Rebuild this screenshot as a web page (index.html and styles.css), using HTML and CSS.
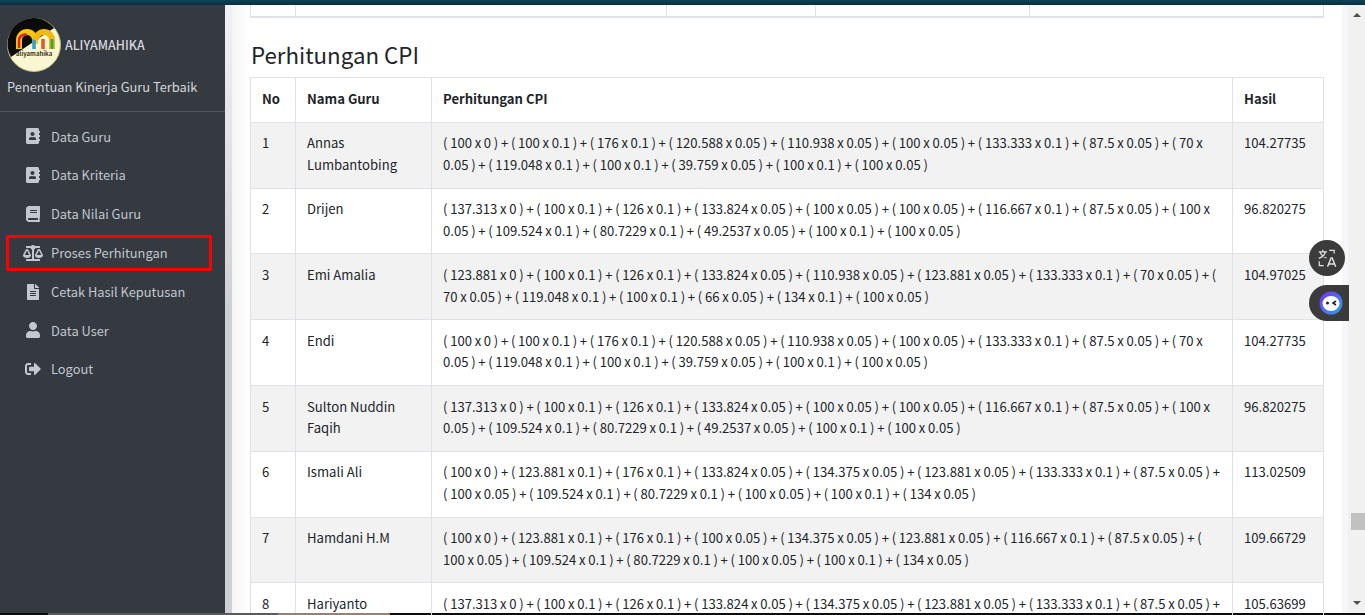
FILE: index.html
```html
<!DOCTYPE html>
<html lang="en">
<head>
    <meta charset="UTF-8">
    <meta name="viewport" content="width=device-width, initial-scale=1.0">
    <title>Perhitungan CPI</title>
    <link rel="stylesheet" href="styles.css">
</head>
<body>

    <div class="topbar"></div>

    <div class="layout">
        <aside class="sidebar">
            <div class="brand">
                <svg class="logo" viewBox="0 0 54 54">
                    <circle cx="27" cy="27" r="26.500" fill="#fbf6d2" stroke="#b9c07a" stroke-width="1"/>
                    <path d="M4 39 A26 26 0 0 1 47 10 Z" fill="#0b0b0b"/>
                    <path d="M12 31 V22 A8 8 0 0 1 28 22 V26" fill="none" stroke="#f6c712" stroke-width="6"/>
                    <path d="M12 30 V23 A6 6 0 0 1 20 17" fill="none" stroke="#e0202a" stroke-width="2.500"/>
                    <path d="M27 31 V21" fill="none" stroke="#2c9fd8" stroke-width="3.500"/>
                    <path d="M29 22 A8 8 0 0 1 45 22 V31" fill="none" stroke="#f2b90f" stroke-width="6"/>
                    <path d="M36 31 V21" fill="none" stroke="#e8541a" stroke-width="3.500"/>
                    <path d="M45 31 V21" fill="none" stroke="#3aa845" stroke-width="3"/>
                    <text class="logo-text" x="9" y="38">aliyamahika</text>
                </svg>
                <span class="brand-name">ALIYAMAHIKA</span>
            </div>
            <div class="brand-sub">Penentuan Kinerja Guru Terbaik</div>

            <nav class="nav">
                <a class="nav-link">
                    <svg class="nav-icon" viewBox="0 0 448 512"><path d="M436 160c6.600 0 12-5.400 12-12v-40c0-6.600-5.400-12-12-12h-20V48c0-26.500-21.500-48-48-48H48C21.500 0 0 21.500 0 48v416c0 26.500 21.500 48 48 48h320c26.500 0 48-21.500 48-48v-48h20c6.600 0 12-5.400 12-12v-40c0-6.600-5.400-12-12-12h-20v-64h20c6.600 0 12-5.400 12-12v-40c0-6.600-5.400-12-12-12h-20v-64h20zm-228-32c35.300 0 64 28.700 64 64s-28.700 64-64 64-64-28.700-64-64 28.700-64 64-64zm112 236.800c0 10.600-10 19.200-22.400 19.200H118.400C106 384 96 375.400 96 364.800v-19.200c0-31.800 30.100-57.600 67.200-57.600h5c12.300 5.100 25.700 8 39.800 8s27.600-2.900 39.800-8h5c37.100 0 67.200 25.800 67.200 57.600v19.200z"/></svg>
                    Data Guru
                </a>
                <a class="nav-link">
                    <svg class="nav-icon" viewBox="0 0 448 512"><path d="M436 160c6.600 0 12-5.400 12-12v-40c0-6.600-5.400-12-12-12h-20V48c0-26.500-21.500-48-48-48H48C21.500 0 0 21.500 0 48v416c0 26.500 21.500 48 48 48h320c26.500 0 48-21.500 48-48v-48h20c6.600 0 12-5.400 12-12v-40c0-6.600-5.400-12-12-12h-20v-64h20c6.600 0 12-5.400 12-12v-40c0-6.600-5.400-12-12-12h-20v-64h20zm-228-32c35.300 0 64 28.700 64 64s-28.700 64-64 64-64-28.700-64-64 28.700-64 64-64zm112 236.800c0 10.600-10 19.200-22.400 19.200H118.400C106 384 96 375.400 96 364.800v-19.200c0-31.800 30.100-57.600 67.200-57.600h5c12.300 5.100 25.700 8 39.800 8s27.600-2.900 39.800-8h5c37.100 0 67.200 25.800 67.200 57.600v19.200z"/></svg>
                    Data Kriteria
                </a>
                <a class="nav-link">
                    <svg class="nav-icon" viewBox="0 0 448 512"><path d="M448 360V24c0-13.300-10.700-24-24-24H96C43 0 0 43 0 96v320c0 53 43 96 96 96h328c13.300 0 24-10.700 24-24v-16c0-7.500-3.500-14.300-8.900-18.700-4.200-15.400-4.200-59.300 0-74.700 5.400-4.300 8.900-11.100 8.900-18.600zM128 134c0-3.300 2.700-6 6-6h212c3.300 0 6 2.700 6 6v20c0 3.300-2.700 6-6 6H134c-3.300 0-6-2.700-6-6v-20zm0 64c0-3.300 2.700-6 6-6h212c3.300 0 6 2.700 6 6v20c0 3.300-2.700 6-6 6H134c-3.300 0-6-2.700-6-6v-20zm253.400 250H96c-17.700 0-32-14.300-32-32 0-17.600 14.400-32 32-32h285.400c-1.900 17.100-1.900 46.900 0 64z"/></svg>
                    Data Nilai Guru
                </a>
                <a class="nav-link active">
                    <svg class="nav-icon" viewBox="0 0 640 512"><path d="M256 336h-.02c0-16.180 1.340-8.730-85.050-181.510-17.650-35.290-68.190-35.360-85.870 0C-2.060 328.750.02 320.330.02 336H0c0 44.180 57.310 80 128 80s128-35.820 128-80zM128 176l72 144H56l72-144zm511.980 160c0-16.180 1.340-8.730-85.050-181.510-17.650-35.290-68.190-35.360-85.870 0-87.120 174.260-85.040 165.840-85.040 181.510H384c0 44.180 57.310 80 128 80s128-35.820 128-80h-.02zM440 320l72-144 72 144H440zm88 128H352V153.250c23.510-10.290 41.160-31.480 46.390-57.250H528c8.840 0 16-7.160 16-16V48c0-8.840-7.160-16-16-16H383.640C369.040 12.680 346.090 0 320 0s-49.040 12.680-63.640 32H112c-8.840 0-16 7.160-16 16v32c0 8.840 7.160 16 16 16h129.610c5.230 25.760 22.870 46.960 46.390 57.250V448H112c-8.840 0-16 7.160-16 16v32c0 8.840 7.160 16 16 16h416c8.840 0 16-7.160 16-16v-32c0-8.840-7.160-16-16-16z"/></svg>
                    Proses Perhitungan
                </a>
                <a class="nav-link">
                    <svg class="nav-icon" viewBox="0 0 384 512"><path d="M224 136V0H24C10.700 0 0 10.700 0 24v464c0 13.300 10.700 24 24 24h336c13.300 0 24-10.700 24-24V160H248c-13.200 0-24-10.800-24-24zm64 236c0 6.600-5.400 12-12 12H108c-6.600 0-12-5.400-12-12v-8c0-6.600 5.400-12 12-12h168c6.600 0 12 5.400 12 12v8zm0-64c0 6.600-5.400 12-12 12H108c-6.600 0-12-5.400-12-12v-8c0-6.600 5.400-12 12-12h168c6.600 0 12 5.400 12 12v8zm0-72v8c0 6.600-5.400 12-12 12H108c-6.600 0-12-5.400-12-12v-8c0-6.600 5.400-12 12-12h168c6.600 0 12 5.400 12 12zm96-114.100v6.100H256V0h6.100c6.400 0 12.500 2.500 17 7l97.900 98c4.500 4.500 7 10.600 7 16.900z"/></svg>
                    Cetak Hasil Keputusan
                </a>
                <a class="nav-link">
                    <svg class="nav-icon" viewBox="0 0 448 512"><path d="M224 256c70.700 0 128-57.300 128-128S294.700 0 224 0 96 57.300 96 128s57.300 128 128 128zm89.600 32h-16.700c-22.200 10.200-46.900 16-72.900 16s-50.600-5.800-72.900-16h-16.700C60.200 288 0 348.200 0 422.400V464c0 26.500 21.500 48 48 48h352c26.500 0 48-21.500 48-48v-41.600c0-74.200-60.200-134.400-134.400-134.400z"/></svg>
                    Data User
                </a>
                <a class="nav-link">
                    <svg class="nav-icon" viewBox="0 0 512 512"><path d="M497 273L329 441c-15 15-41 4.500-41-17v-96H152c-13.300 0-24-10.700-24-24v-96c0-13.300 10.700-24 24-24h136V88c0-21.400 25.900-32 41-17l168 168c9.300 9.400 9.300 24.600 0 34zM192 436v-40c0-6.600-5.400-12-12-12H96c-17.700 0-32-14.300-32-32V160c0-17.700 14.300-32 32-32h84c6.600 0 12-5.400 12-12V76c0-6.600-5.400-12-12-12H96c-53 0-96 43-96 96v192c0 53 43 96 96 96h84c6.600 0 12-5.400 12-12z"/></svg>
                    Logout
                </a>
            </nav>
        </aside>

        <div class="shade"></div>

        <main class="content">
            <div class="prev-table">
                <span class="prev-cell w-no"></span>
                <span class="prev-cell w-a"></span>
                <span class="prev-cell w-b"></span>
                <span class="prev-cell w-c"></span>
                <span class="prev-cell w-d"></span>
            </div>

            <h3 class="title">Perhitungan CPI</h3>

            <table class="cpi-table">
                <thead>
                    <tr>
                        <th class="col-no">No</th>
                        <th class="col-name">Nama Guru</th>
                        <th>Perhitungan CPI</th>
                        <th class="col-result">Hasil</th>
                    </tr>
                </thead>
                <tbody>
                    <tr>
                        <td>1</td>
                        <td>Annas Lumbantobing</td>
                        <td class="formula">( 100 x 0 ) + ( 100 x 0.1 ) + ( 176 x 0.1 ) + ( 120.588 x 0.05 ) + ( 110.938 x 0.05 ) + ( 100 x 0.05 ) + ( 133.333 x 0.1 ) + ( 87.5 x 0.05 ) + ( 70 x 0.05 ) + ( 119.048 x 0.1 ) + ( 100 x 0.1 ) + ( 39.759 x 0.05 ) + ( 100 x 0.1 ) + ( 100 x 0.05 )</td>
                        <td>104.27735</td>
                    </tr>
                    <tr>
                        <td>2</td>
                        <td>Drijen</td>
                        <td class="formula">( 137.313 x 0 ) + ( 100 x 0.1 ) + ( 126 x 0.1 ) + ( 133.824 x 0.05 ) + ( 100 x 0.05 ) + ( 100 x 0.05 ) + ( 116.667 x 0.1 ) + ( 87.5 x 0.05 ) + ( 100 x 0.05 ) + ( 109.524 x 0.1 ) + ( 80.7229 x 0.1 ) + ( 49.2537 x 0.05 ) + ( 100 x 0.1 ) + ( 100 x 0.05 )</td>
                        <td>96.820275</td>
                    </tr>
                    <tr>
                        <td>3</td>
                        <td>Emi Amalia</td>
                        <td class="formula">( 123.881 x 0 ) + ( 100 x 0.1 ) + ( 126 x 0.1 ) + ( 133.824 x 0.05 ) + ( 110.938 x 0.05 ) + ( 123.881 x 0.05 ) + ( 133.333 x 0.1 ) + ( 70 x 0.05 ) + ( 70 x 0.05 ) + ( 119.048 x 0.1 ) + ( 100 x 0.1 ) + ( 66 x 0.05 ) + ( 134 x 0.1 ) + ( 100 x 0.05 )</td>
                        <td>104.97025</td>
                    </tr>
                    <tr>
                        <td>4</td>
                        <td>Endi</td>
                        <td class="formula">( 100 x 0 ) + ( 100 x 0.1 ) + ( 176 x 0.1 ) + ( 120.588 x 0.05 ) + ( 110.938 x 0.05 ) + ( 100 x 0.05 ) + ( 133.333 x 0.1 ) + ( 87.5 x 0.05 ) + ( 70 x 0.05 ) + ( 119.048 x 0.1 ) + ( 100 x 0.1 ) + ( 39.759 x 0.05 ) + ( 100 x 0.1 ) + ( 100 x 0.05 )</td>
                        <td>104.27735</td>
                    </tr>
                    <tr>
                        <td>5</td>
                        <td>Sulton Nuddin Faqih</td>
                        <td class="formula">( 137.313 x 0 ) + ( 100 x 0.1 ) + ( 126 x 0.1 ) + ( 133.824 x 0.05 ) + ( 100 x 0.05 ) + ( 100 x 0.05 ) + ( 116.667 x 0.1 ) + ( 87.5 x 0.05 ) + ( 100 x 0.05 ) + ( 109.524 x 0.1 ) + ( 80.7229 x 0.1 ) + ( 49.2537 x 0.05 ) + ( 100 x 0.1 ) + ( 100 x 0.05 )</td>
                        <td>96.820275</td>
                    </tr>
                    <tr>
                        <td>6</td>
                        <td>Ismali Ali</td>
                        <td class="formula">( 100 x 0 ) + ( 123.881 x 0.1 ) + ( 176 x 0.1 ) + ( 133.824 x 0.05 ) + ( 134.375 x 0.05 ) + ( 123.881 x 0.05 ) + ( 133.333 x 0.1 ) + ( 87.5 x 0.05 ) + ( 100 x 0.05 ) + ( 109.524 x 0.1 ) + ( 80.7229 x 0.1 ) + ( 100 x 0.05 ) + ( 100 x 0.1 ) + ( 134 x 0.05 )</td>
                        <td>113.02509</td>
                    </tr>
                    <tr>
                        <td>7</td>
                        <td>Hamdani H.M</td>
                        <td class="formula">( 100 x 0 ) + ( 123.881 x 0.1 ) + ( 176 x 0.1 ) + ( 100 x 0.05 ) + ( 134.375 x 0.05 ) + ( 123.881 x 0.05 ) + ( 116.667 x 0.1 ) + ( 87.5 x 0.05 ) + ( 100 x 0.05 ) + ( 109.524 x 0.1 ) + ( 80.7229 x 0.1 ) + ( 100 x 0.05 ) + ( 100 x 0.1 ) + ( 134 x 0.05 )</td>
                        <td>109.66729</td>
                    </tr>
                    <tr>
                        <td>8</td>
                        <td>Hariyanto</td>
                        <td class="formula">( 137.313 x 0 ) + ( 100 x 0.1 ) + ( 126 x 0.1 ) + ( 133.824 x 0.05 ) + ( 134.375 x 0.05 ) + ( 123.881 x 0.05 ) + ( 133.333 x 0.1 ) + ( 87.5 x 0.05 ) +</td>
                        <td>105.63699</td>
                    </tr>
                </tbody>
            </table>
        </main>

        <div class="gutter"></div>
        <div class="scrollbar">
            <span class="arrow-up"></span>
            <span class="thumb"></span>
            <span class="arrow-down"></span>
        </div>
    </div>

    <div class="bottom-line">
        <span class="line-black"></span>
        <span class="line-gray"></span>
        <span class="line-brown"></span>
    </div>

    <button class="float-btn" type="button">
        <svg viewBox="0 0 20 20" width="22" height="22">
            <path d="M2.500 4.500h7.500M6.200 2.500v2M8.500 4.500C8 7 5.500 9.300 2.500 10.300M3.800 5C4.800 7.300 6.800 9.200 9.500 10" fill="none" stroke="#e4e4e4" stroke-width="1.100"/>
            <path d="M12 3h4.500v3M3 13v4h4" fill="none" stroke="#e4e4e4" stroke-width="1.100"/>
            <path d="M10.500 18l3.200-8h1l3.200 8M11.700 15.500h5" fill="none" stroke="#e4e4e4" stroke-width="1.300"/>
        </svg>
    </button>
    <div class="float-tab">
        <svg viewBox="0 0 24 24" width="24" height="24">
            <defs>
                <linearGradient id="ring" x1="0" y1="0" x2="1" y2="1">
                    <stop offset="0" stop-color="#7a2cf0"/>
                    <stop offset="1" stop-color="#28a8f0"/>
                </linearGradient>
            </defs>
            <circle cx="12" cy="12" r="11.500" fill="url(#ring)"/>
            <ellipse cx="12" cy="12.500" rx="8.500" ry="7.500" fill="#fff"/>
            <circle cx="8.500" cy="12" r="1.500" fill="#222"/>
            <path d="M17 10l-3 2 3 2" fill="none" stroke="#222" stroke-width="1.600"/>
        </svg>
    </div>

</body>
</html>
```

FILE: styles.css
```css
* {
    box-sizing: border-box;
}

html, body {
    height: 615px;
    overflow: hidden;
}

body {
    margin: 0;
    font-family: "Noto Sans CJK SC", "Open Sans", sans-serif;
    font-size: 13.100px;
    line-height: 21.600px;
    color: #212529;
    background: #fff;
}

.topbar {
    height: 5px;
    background: linear-gradient(#0f4257, #08303f);
}

.layout {
    display: flex;
    height: 608px;
}

.bottom-line {
    display: flex;
    height: 2px;
    background: #0c0c0c;
}

.line-black { width: 48px; }
.line-gray { width: 230px; background: #5a5a5a; }
.line-brown { width: 112px; background: #9a7f70; }

/* sidebar */
.sidebar {
    width: 225px;
    flex: none;
    background: #343a40;
    color: #c2c7d0;
}

.brand {
    display: flex;
    align-items: center;
    gap: 4px;
    padding: 13px 0 0 7px;
}

.logo {
    width: 54px;
    height: 54px;
    flex: none;
}

.logo-text {
    font-size: 6px;
    font-weight: 700;
    fill: #3a3320;
}

.brand-name {
    padding-top: 1px;
    font-size: 12.400px;
    font-weight: 500;
    color: #d4d7db;
}

.brand-sub {
    margin-top: 4px;
    padding: 0 0 13px 7px;
    border-bottom: 1px solid #4f5962;
    font-size: 12.850px;
    color: #d4d7db;
}

.nav {
    display: flex;
    flex-direction: column;
    gap: 3.800px;
    padding: 7.300px 14px 0 7px;
    font-size: 12.850px;
}

.nav-link {
    display: flex;
    align-items: center;
    height: 35px;
    border: 3px solid transparent;
    border-radius: 2px;
    padding-left: 13px;
}

.nav-link.active {
    height: 36px;
    margin: 0 -1px -1px;
    padding-left: 14px;
    border-color: #f00;
}

.nav-icon {
    width: 20px;
    height: 16px;
    margin-right: 8px;
    fill: #c2c7d0;
    flex: none;
}

/* main */
.shade {
    width: 7px;
    flex: none;
    background: linear-gradient(#f1f1f5, #cfd0d6 50%);
}

.content {
    flex: 1;
    min-width: 0;
    padding: 0 18px;
    background: linear-gradient(to right, #f5f5f5, #fff 18px);
}

.prev-table {
    display: flex;
    height: 13px;
    border-style: solid;
    border-color: #dee2e6;
    border-width: 0 1px 2px;
}

.prev-cell {
    border-right: 1px solid #dee2e6;
}

.w-no { width: 45px; }
.w-a { width: 371px; }
.w-b { width: 149px; }
.w-c { width: 214px; }
.w-d { flex: 1; border-right: 0; }

.title {
    margin: 22px 0 8px 1px;
    font-size: 22.300px;
    font-weight: 400;
    line-height: 29px;
}

.cpi-table {
    width: 100%;
    border-collapse: collapse;
    table-layout: fixed;
}

.cpi-table th,
.cpi-table td {
    border: 1px solid #dee2e6;
    padding: 9.600px 11px 12px;
    text-align: left;
    vertical-align: top;
}

.cpi-table th {
    font-weight: 700;
    padding-bottom: 12.700px;
}

.cpi-table .formula {
    word-spacing: -0.230px;
}

.cpi-table tbody tr:nth-child(odd) {
    background: #f2f2f2;
}

.col-no { width: 45px; }
.col-name { width: 136px; }
.col-result { width: 91px; }

/* window scrollbar */
.gutter {
    width: 6px;
    flex: none;
    background: #f4f6f9;
}

.scrollbar {
    position: relative;
    width: 17px;
    flex: none;
    background: #f1f1f1;
}

.thumb {
    position: absolute;
    top: 508px;
    left: 3px;
    width: 14px;
    height: 17px;
    background: #c1c1c1;
}

.arrow-up,
.arrow-down {
    position: absolute;
    left: 5px;
    border-left: 4px solid transparent;
    border-right: 4px solid transparent;
}

.arrow-up {
    top: 8px;
    border-bottom: 4px solid #505050;
}

.arrow-down {
    top: 596px;
    border-top: 4px solid #505050;
}

/* floating extension buttons */
.float-btn {
    position: absolute;
    top: 240px;
    left: 1309px;
    width: 36px;
    height: 36px;
    padding: 0;
    border: 0;
    border-radius: 50%;
    background: #3b3b3b;
    display: flex;
    align-items: center;
    justify-content: center;
}

.float-tab {
    position: absolute;
    top: 285px;
    left: 1309px;
    width: 40px;
    height: 36px;
    padding-left: 10px;
    border-radius: 18px 0 0 18px;
    background: #3b3b3b;
    display: flex;
    align-items: center;
}
```
